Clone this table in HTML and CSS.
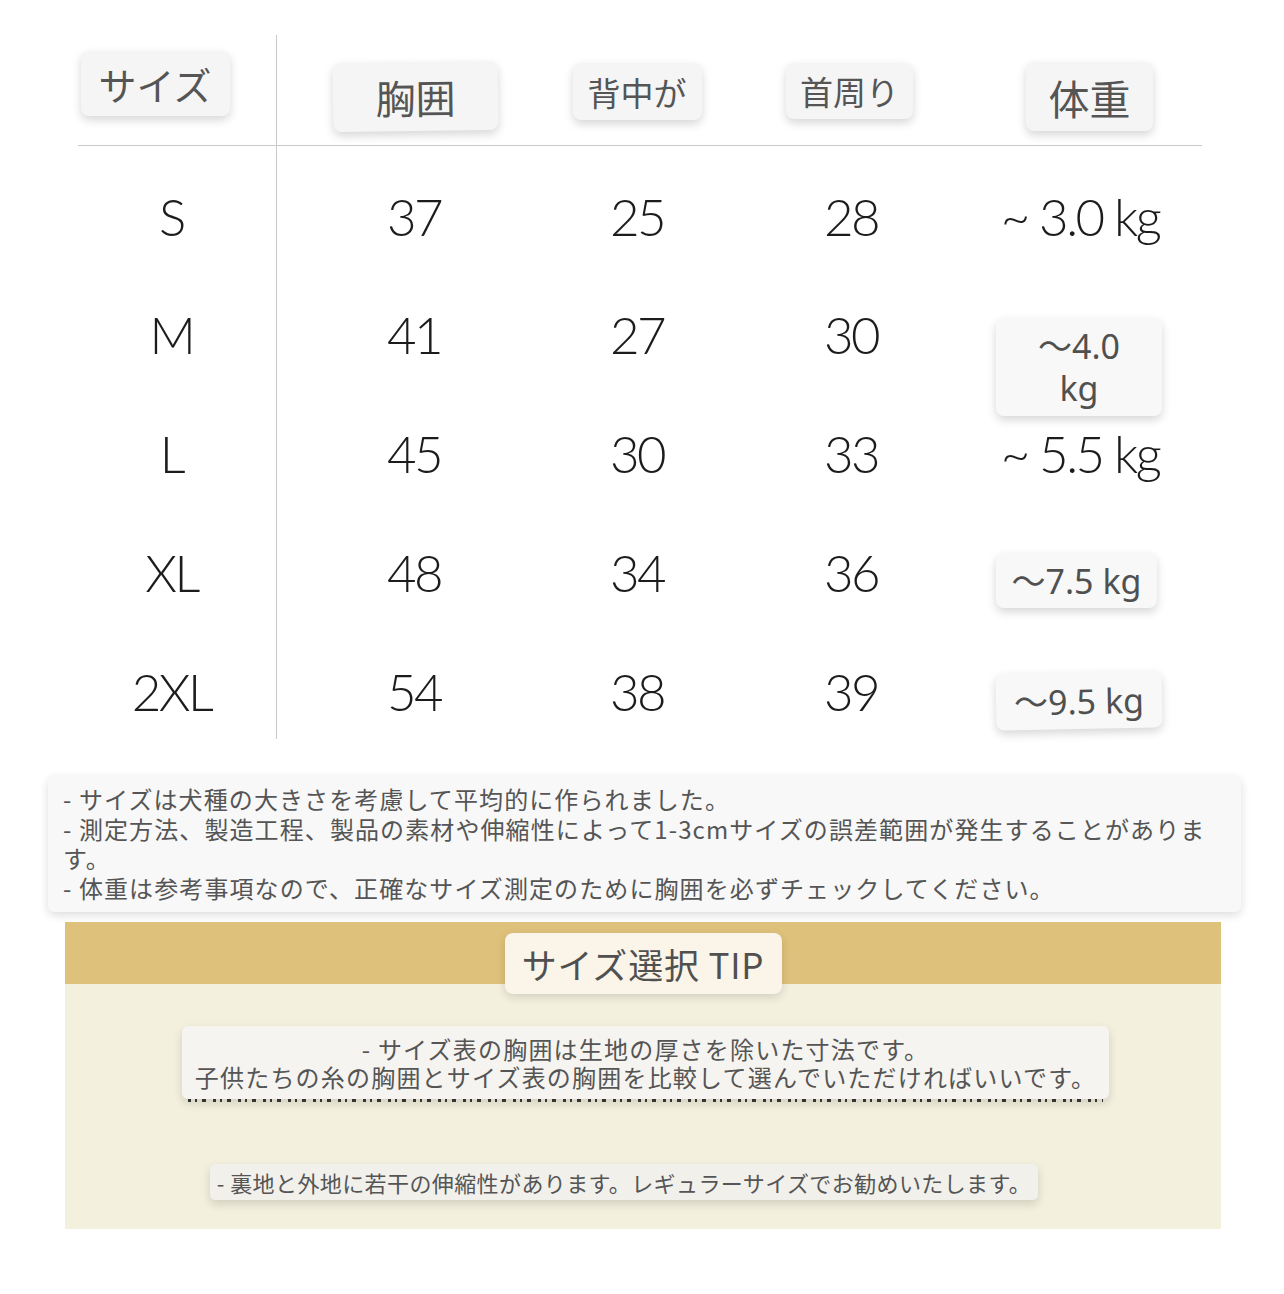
FILE: index.html
```html
<!DOCTYPE html>
<html lang="ja">
<head>
<meta charset="utf-8">
<title>サイズ表</title>
<link rel="stylesheet" href="styles.css">
</head>
<body>
<div class="page">
  <div class="size-table">
    <div class="th c1"><span class="chip h-size">サイズ</span></div>
    <div class="th"><span class="chip h-chest">胸囲</span></div>
    <div class="th"><span class="chip h-back">背中が</span></div>
    <div class="th"><span class="chip h-neck">首周り</span></div>
    <div class="th c5"><span class="chip h-weight">体重</span></div>

    <div class="td c1 first">S</div>
    <div class="td first">37</div>
    <div class="td first">25</div>
    <div class="td first">28</div>
    <div class="td c5 first">~ 3.0 kg</div>

    <div class="td c1">M</div>
    <div class="td">41</div>
    <div class="td">27</div>
    <div class="td">30</div>
    <div class="td c5"><span class="chip w-chip w-m">〜4.0<br>kg</span></div>

    <div class="td c1">L</div>
    <div class="td">45</div>
    <div class="td">30</div>
    <div class="td">33</div>
    <div class="td c5">~ 5.5 kg</div>

    <div class="td c1">XL</div>
    <div class="td">48</div>
    <div class="td">34</div>
    <div class="td">36</div>
    <div class="td c5"><span class="chip w-chip w-xl">〜7.5 kg</span></div>

    <div class="td c1 last">2XL</div>
    <div class="td last">54</div>
    <div class="td last">38</div>
    <div class="td last">39</div>
    <div class="td c5 last"><span class="chip w-chip w-2xl">〜9.5 kg</span></div>
  </div>

  <div class="notes">
    <p>- サイズは犬種の大きさを考慮して平均的に作られました。</p>
    <p>- 測定方法、製造工程、製品の素材や伸縮性によって1-3cmサイズの誤差範囲が発生することがあります。</p>
    <p>- 体重は参考事項なので、正確なサイズ測定のために胸囲を必ずチェックしてください。</p>
  </div>

  <div class="tip">
    <div class="tip-title">サイズ選択 TIP</div>
    <div class="tip-chip">- サイズ表の胸囲は生地の厚さを除いた寸法です。<br>子供たちの糸の胸囲とサイズ表の胸囲を比較して選んでいただければいいです。</div>
    <div class="orig-fragment"></div>
    <div class="tip-chip2">- 裏地と外地に若干の伸縮性があります。レギュラーサイズでお勧めいたします。</div>
  </div>
</div>
</body>
</html>
```

FILE: styles.css
```css
* { box-sizing: border-box; }
html, body { margin: 0; padding: 0; background: #ffffff; }
body { width: 1284px; height: 1294px; overflow: hidden; font-family: "Noto Sans", "Noto Sans CJK JP", sans-serif; color: #505050; }
p { margin: 0; }

.page { padding-top: 35px; }

.size-table {
  margin-left: 78px;
  width: 1124px;
  display: grid;
  grid-template-columns: 199px 274px 172px 256px 223px;
  grid-template-rows: 111px 129px 119px 119px 119px 107px;
}

.th {
  border-bottom: 1px solid #c9c9c9;
  display: flex;
  justify-content: center;
  align-items: flex-start;
}
.td {
  display: flex;
  justify-content: center;
  align-items: center;
  font-family: "Lato", "Liberation Sans", sans-serif;
  font-weight: 300;
  font-size: 51px;
  letter-spacing: -2.5px;
  color: #1c1c1c;
}
.td.first, .td.last { padding-top: 11px; }
.c1 { border-right: 1px solid #c9c9c9; padding-right: 11px; }
.c5 { padding-right: 21px; position: relative; }

.chip {
  display: flex;
  align-items: center;
  justify-content: center;
  background: #f5f5f5;
  border-radius: 8px;
  box-shadow: 0 4px 10px rgba(0, 0, 0, 0.16);
  color: #555555;
  font-family: "Noto Sans CJK JP", sans-serif;
  letter-spacing: 0;
}
.h-size { width: 149px; height: 65px; margin-top: 16px; margin-right: 33px; font-size: 38px; }
.h-chest { width: 165px; height: 69px; margin-top: 27px; margin-left: 3px; font-size: 40px; transform: rotate(-0.8deg); }
.h-back { width: 129px; height: 57px; margin-top: 28px; font-size: 33px; }
.h-neck { width: 127px; height: 56px; margin-top: 28px; margin-right: 3px; font-size: 33px; }
.h-weight { width: 127px; height: 69px; margin-top: 27px; margin-left: 19px; font-size: 41px; }

.w-chip {
  position: absolute;
  left: 17px;
  top: 40px;
  font-family: "Noto Sans", "Noto Sans CJK JP", sans-serif;
  font-weight: 400;
  font-size: 34px;
  line-height: 42px;
  text-align: center;
  background: #f8f8f8;
  color: #505050;
  z-index: 2;
}
.w-m { top: 43px; width: 166px; height: 98px; }
.w-xl { width: 161px; height: 55px; }
.w-2xl { width: 166px; height: 57px; transform: rotate(-1.2deg); }

.notes {
  margin: 37px 0 0 48px;
  width: 1193px;
  height: 136px;
  padding: 8px 20px 9px 15px;
  background: #f8f8f8;
  border-radius: 6px;
  box-shadow: 0 3px 10px rgba(0, 0, 0, 0.14);
  font-family: "Noto Sans CJK JP", sans-serif;
  font-size: 24px;
  letter-spacing: 1.1px;
  line-height: 29.7px;
  color: #555555;
}

.tip {
  margin: 10px 0 0 65px;
  width: 1156px;
  height: 307px;
  background: linear-gradient(#dec27b 0, #dec27b 62px, #f3f0de 62px, #f3f0de 100%);
  display: flex;
  flex-direction: column;
  align-items: center;
  font-family: "Noto Sans CJK JP", sans-serif;
}
.tip-title {
  margin-top: 11px;
  width: 277px;
  height: 61px;
  display: flex;
  align-items: center;
  justify-content: center;
  background: #fbf5e9;
  border-radius: 8px;
  box-shadow: 0 3px 10px rgba(0, 0, 0, 0.14);
  font-size: 35px;
  letter-spacing: 0.8px;
  color: #505050;
}
.tip-chip {
  margin-top: 32px;
  margin-left: 5px;
  width: 927px;
  height: 73px;
  padding-top: 9px;
  background: #f5f4f0;
  border-radius: 6px;
  box-shadow: 0 4px 10px rgba(0, 0, 0, 0.14);
  font-size: 24px;
  letter-spacing: 1.2px;
  line-height: 28px;
  text-align: center;
  color: #555555;
  position: relative;
  z-index: 1;
}
.orig-fragment {
  margin-left: 5px;
  width: 915px;
  height: 3px;
  background:
    repeating-linear-gradient(90deg, #1a1a1a 0 3px, transparent 3px 7px, #1a1a1a 7px 9px, transparent 9px 14px, #1a1a1a 14px 18px, transparent 18px 25px);
  opacity: 0.85;
}
.tip-chip2 {
  margin-top: 62px;
  margin-right: 38px;
  width: 828px;
  height: 36px;
  display: flex;
  align-items: center;
  justify-content: center;
  background: #f1f0eb;
  border-radius: 5px;
  box-shadow: 0 4px 10px rgba(0, 0, 0, 0.14);
  font-size: 22px;
  letter-spacing: 0.4px;
  color: #555555;
}
```
